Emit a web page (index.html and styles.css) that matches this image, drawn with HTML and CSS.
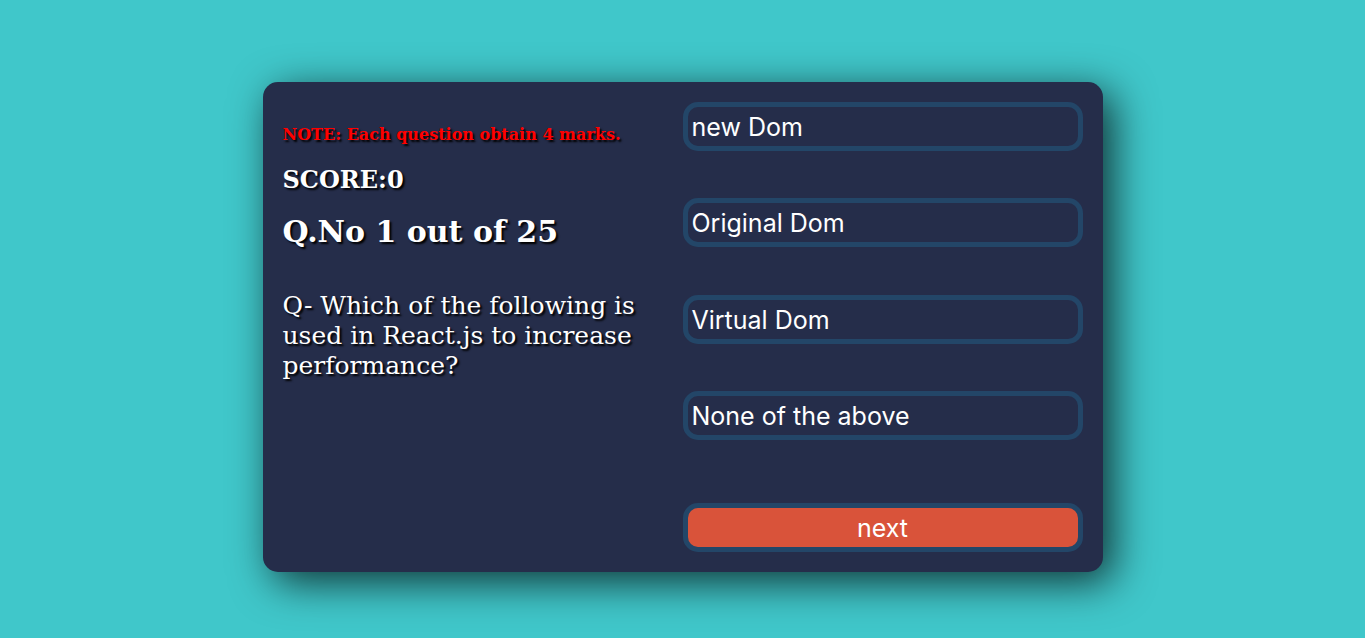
FILE: index.html
```html
<!DOCTYPE html>
<html lang="en">
<head>
<meta charset="utf-8">
<title>Quiz</title>
<link rel="stylesheet" href="styles.css">
</head>
<body>
<div class="app">
  <div class="question-section">
    <h4 class="note">NOTE: Each question obtain 4 marks.</h4>
    <h2 class="score">SCORE:0</h2>
    <h1 class="question-count">Q.No 1 out of 25</h1>
    <div class="question-text">Q- Which of the following is used in React.js to increase performance?</div>
  </div>
  <div class="answer-section">
    <div class="options">
      <button class="option">new Dom</button>
      <button class="option">Original Dom</button>
      <button class="option">Virtual Dom</button>
      <button class="option">None of the above</button>
    </div>
    <button class="next">next</button>
  </div>
</div>
</body>
</html>
```

FILE: styles.css
```css
html, body {
  background: #40c7ca;
}
body {
  margin: 8px;
  min-height: 100vh;
  display: flex;
  justify-content: center;
  align-items: center;
  font-family: "DejaVu Serif", serif;
  color: #ffffff;
}
.app {
  width: 800px;
  min-height: 450px;
  padding: 20px;
  background: #252d4a;
  border-radius: 15px;
  box-shadow: 10px 10px 42px 0 rgba(0, 0, 0, 0.75);
  display: flex;
  justify-content: space-evenly;
}
.question-section {
  width: 100%;
}
.note {
  color: #ff0000;
  font-size: 16px;
  font-weight: bold;
  margin: 23px 0 0;
  text-shadow: 2px 2px 2px #000;
}
.score {
  font-size: 24px;
  font-weight: bold;
  margin: 21px 0 0;
  text-shadow: 2px 2px 2px #000;
}
.question-count {
  font-size: 30px;
  font-weight: bold;
  margin: 20px 0 0;
  text-shadow: 2px 2px 2px #000;
}
.question-text {
  margin-top: 42px;
  font-size: 25px;
  line-height: 30px;
  text-shadow: 2px 2px 2px #000;
}
.answer-section {
  width: 100%;
  display: flex;
  flex-direction: column;
  justify-content: space-between;
}
.options {
  display: flex;
  flex-direction: column;
  gap: 47.33px;
}
.option, .next {
  width: 100%;
  height: 49px;
  font-family: Inter, sans-serif;
  font-size: 25px;
  color: #ffffff;
  border: 5px solid #234668;
  border-radius: 15px;
  padding: 1px 4px 0;
  display: flex;
  align-items: center;
  cursor: pointer;
}
.option {
  background: #252d4a;
  justify-content: flex-start;
}
.next {
  background: #d9533a;
  justify-content: center;
}
```
